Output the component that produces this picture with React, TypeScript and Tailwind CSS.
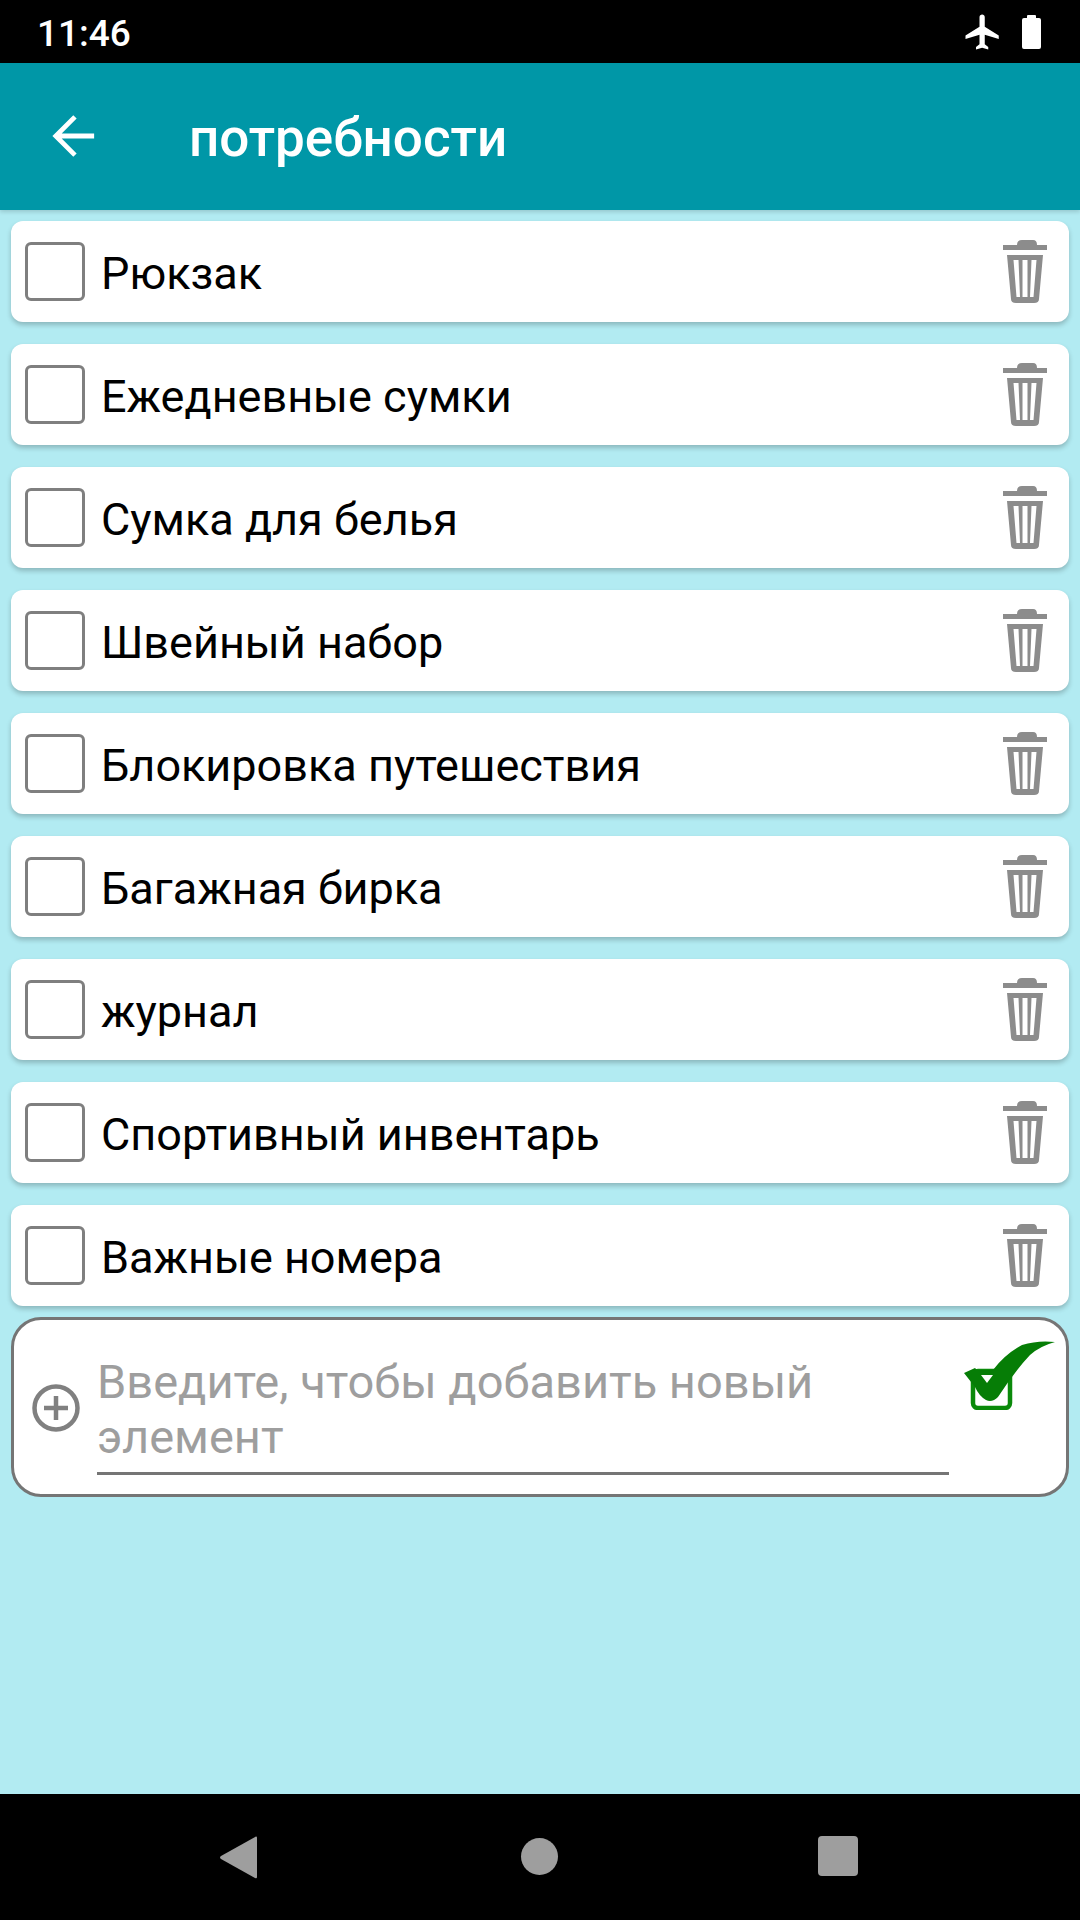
const items = [
  "Рюкзак",
  "Ежедневные сумки",
  "Сумка для белья",
  "Швейный набор",
  "Блокировка путешествия",
  "Багажная бирка",
  "журнал",
  "Спортивный инвентарь",
  "Важные номера",
];

const TrashIcon = () => (
  <svg viewBox="0 0 44 63" className="w-[44px] h-[63px] shrink-0" fill="#8c8c8c">
    {/* lid */}
    <path d="M14 5 Q14 0 19 0 H30 Q34 0 34 5 H44 V10 H0 V5 Z" />
    {/* can */}
    <path
      fillRule="evenodd"
      d="M4 15 H40 L36 59 Q36 63 31 63 H13 Q8 63 8 59 Z M10.5 20 L13.5 57 H17 L15.5 20 Z M19.5 20 V57 H24.5 V20 Z M28.5 20 L27 57 H30.5 L33.5 20 Z"
    />
  </svg>
);

const GreenCheck = () => (
  <svg viewBox="0 0 91 70" className="w-[91px] h-[70px]">
    <rect x="9" y="31" width="37" height="37" rx="5" fill="#fff" stroke="#0a8a0a" strokeWidth="4.5" />
    <path
      d="M0 33 L11 28 L13 30 L29 30 Q41 14 58 5 Q74 0 91 2 Q76 6 66 15 Q50 32 34 57 Q28 63 22 60 Q15 56 11 47 Z"
      fill="#067d06"
    />
    <path d="M17 35 H29 L23 43 Z" fill="#fff" />
  </svg>
);

const Row = ({ label }: { label: string }) => (
  <div className="h-[101px] bg-white rounded-[12px] shadow-[0_3px_5px_rgba(0,0,0,0.22)] flex items-center pl-[14px] pr-[22px]">
    <div className="w-[60px] h-[59px] border-[3px] border-[#7f7f7f] rounded-[6px] -mt-[1px] shrink-0" />
    <span className="ml-[16px] flex-1 text-[45px] leading-[50px] text-black mt-[5px]">{label}</span>
    <TrashIcon />
  </div>
);

export default function App() {
  return (
    <div className="w-[1080px] h-[1920px] flex flex-col bg-[#b2ebf2] font-['Roboto',sans-serif] overflow-hidden">
      {/* status bar */}
      <div className="h-[63px] bg-black flex items-center justify-between pl-[37px] pr-[39px] shrink-0">
        <span className="text-white text-[37px] font-medium mt-[4px]">11:46</span>
        <div className="flex items-center gap-[18px]">
          <svg viewBox="0 0 24 24" className="w-[42px] h-[42px]" fill="#fff">
            <path d="M21 16v-2l-8-5V3.5C13 2.67 12.33 2 11.5 2S10 2.67 10 3.5V9l-8 5v2l8-2.5V19l-2 1.5V22l3.5-1 3.5 1v-1.5L13 19v-5.5l8 2.5z" />
          </svg>
          <svg viewBox="0 0 19 34" className="w-[19px] h-[34px]" fill="#fff">
            <path d="M5 3 V1 Q5 0 6 0 H13 Q14 0 14 1 V3 H17 Q19 3 19 5 V32 Q19 34 17 34 H2 Q0 34 0 32 V5 Q0 3 2 3 Z" />
          </svg>
        </div>
      </div>

      {/* toolbar */}
      <div className="h-[147px] bg-[#0097a7] flex items-center pl-[51px] shrink-0 shadow-[0_2px_4px_rgba(0,0,0,0.15)]">
        <svg viewBox="0 0 48 48" className="w-[46px] h-[46px] -mt-[1px]" fill="none" stroke="#fff" strokeWidth="5">
          <path d="M45 24 H5 M25 4 L5 24 L25 44" />
        </svg>
        <h1 className="ml-[92px] text-white text-[53px] font-medium mt-[5px]">потребности</h1>
      </div>

      {/* list */}
      <div className="flex flex-col gap-[22px] px-[11px] pt-[11px]">
        {items.map((item) => (
          <Row key={item} label={item} />
        ))}
      </div>

      {/* add new */}
      <div className="mx-[11px] mt-[11px] h-[180px] bg-white border-[3px] border-[#757575] rounded-[30px] flex pl-[18px] relative">
        <svg viewBox="0 0 48 48" className="w-[48px] h-[48px] mt-[64px] shrink-0" fill="none" stroke="#808080" strokeWidth="4.5">
          <circle cx="24" cy="24" r="21.5" />
          <path d="M24 12 V36 M12 24 H36" />
        </svg>
        <div className="ml-[17px] w-[852px] h-[155px] border-b-[3px] border-[#757575] pt-[34px] text-[47px] leading-[55px] text-[#9e9e9e]">
          Введите, чтобы добавить новый элемент
        </div>
        <div className="absolute left-[950px] top-[20px]">
          <GreenCheck />
        </div>
      </div>

      {/* nav bar */}
      <div className="mt-auto h-[126px] bg-black flex items-center shrink-0 pl-[220px]">
        <svg viewBox="0 0 37 43" className="w-[37px] h-[43px]" fill="#9e9e9e">
          <path d="M36 0.5 Q37 0 37 2 V41 Q37 43 35 42 L1 23 Q-1 21.5 1 20 Z" />
        </svg>
        <div className="ml-[264px] w-[37px] h-[37px] rounded-full bg-[#9e9e9e] -mt-[2px]" />
        <div className="ml-[260px] w-[40px] h-[40px] rounded-[4px] bg-[#9e9e9e] -mt-[2px]" />
      </div>
    </div>
  );
}
